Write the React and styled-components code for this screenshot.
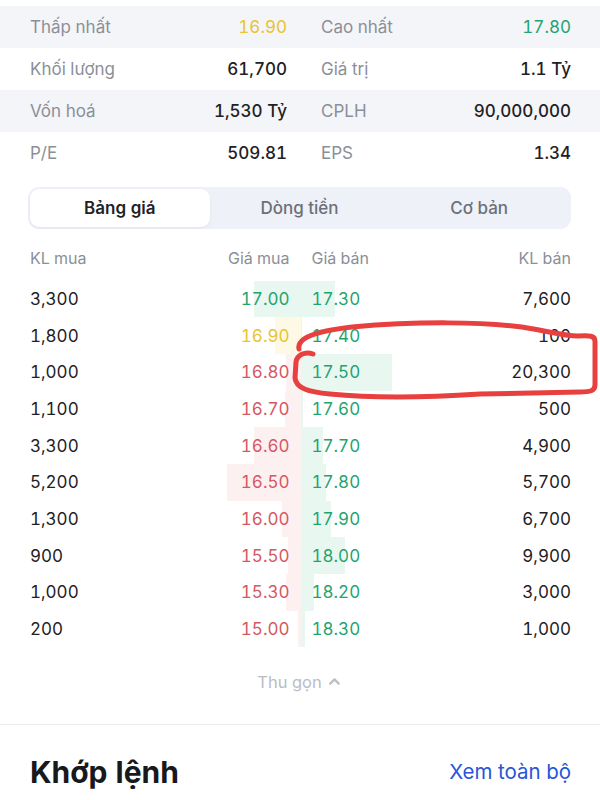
import React from 'react'
import styled, { createGlobalStyle } from 'styled-components'
import { ChevronUp } from 'lucide-react'

const GlobalStyle = createGlobalStyle`
  body {
    margin: 0;
    background: #fff;
    font-family: Inter, "Noto Sans", sans-serif;
    font-variant-numeric: tabular-nums;
    -webkit-font-smoothing: antialiased;
  }
`

const tones = {
  green: '#1fa470',
  red: '#d65862',
  yellow: '#e8c430',
}

const barTones = {
  green: '#e9f7f1',
  red: '#fdf0f1',
  yellow: '#fdf9e4',
}

const Page = styled.div`
  position: relative;
  width: 600px;
  padding-top: 6px;
  overflow: hidden;
`

const StatsRow = styled.div`
  display: grid;
  grid-template-columns: 257px 1fr;
  column-gap: 34px;
  align-items: center;
  height: 42px;
  padding: 0 29px 0 30px;
  background: ${p => (p.$shaded ? '#f3f5f9' : '#fff')};
`

const Pair = styled.div`
  display: flex;
  justify-content: space-between;
  align-items: center;
`

const Label = styled.span`
  font-size: 17px;
  color: #8b8f98;
`

const Value = styled.span`
  font-size: 17px;
  font-weight: ${p => (p.$tone ? 400 : 500)};
  color: ${p => (p.$tone ? tones[p.$tone] : '#1f2125')};
`

const Tabs = styled.div`
  display: grid;
  grid-template-columns: repeat(3, 1fr);
  height: 38px;
  margin: 13px 29px 0 28px;
  padding: 2px;
  border-radius: 11px;
  background: #eef1f7;
`

const Tab = styled.div`
  display: flex;
  align-items: center;
  justify-content: center;
  border-radius: 9px;
  font-size: 17px;
  font-weight: ${p => (p.$active ? 600 : 500)};
  color: ${p => (p.$active ? '#1f2227' : '#6b7079')};
  background: ${p => (p.$active ? '#fff' : 'transparent')};
  box-shadow: ${p => (p.$active ? '0 1px 3px rgba(0,0,0,0.06)' : 'none')};
`

const BookHeader = styled.div`
  display: grid;
  grid-template-columns: 1fr 1fr;
  height: 30px;
  margin: 14px 29px 0 30px;
  font-size: 16px;
  color: #8b8f98;
`

const HeadCell = styled.div`
  display: flex;
  justify-content: space-between;
  align-items: center;
  padding: ${p => (p.$side === 'buy' ? '0 11px 0 0' : '0 0 0 11px')};
`

const Book = styled.div`
  margin: 7.7px 29px 0 30px;
`

const BookRow = styled.div`
  display: grid;
  grid-template-columns: 1fr 1fr;
  height: 36.67px;
`

const Half = styled.div`
  position: relative;
  display: flex;
  justify-content: space-between;
  align-items: center;
  padding: ${p => (p.$side === 'buy' ? '0 11px 0 0' : '0 0 0 11px')};
`

const Bar = styled.div`
  position: absolute;
  top: 0;
  bottom: 0;
  ${p => (p.$side === 'buy' ? 'right: 0;' : 'left: 0;')}
  background: ${p => barTones[p.$tone]};
`

const Vol = styled.span`
  position: relative;
  font-size: 17px;
  color: #1f2125;
`

const Price = styled.span`
  position: relative;
  font-size: 17px;
  color: ${p => tones[p.$tone]};
`

const Collapse = styled.div`
  display: flex;
  align-items: center;
  justify-content: center;
  gap: 4px;
  height: 69px;
  font-size: 16.5px;
  color: #b9bdc5;
`

const Divider = styled.div`
  height: 1px;
  margin-top: 7.5px;
  background: #ececef;
`

const SectionHead = styled.div`
  display: flex;
  justify-content: space-between;
  align-items: center;
  height: 34px;
  margin: 30px 29px 0 30px;
`

const Title = styled.h2`
  margin: 0;
  font-size: 30px;
  font-weight: 700;
  color: #17191c;
`

const SeeAll = styled.a`
  font-size: 20.5px;
  color: #2756d6;
  text-decoration: none;
`

const Scribble = styled.svg`
  position: absolute;
  left: 0;
  top: 0;
  pointer-events: none;
`

const stats = [
  [['Thấp nhất', '16.90', 'yellow'], ['Cao nhất', '17.80', 'green']],
  [['Khối lượng', '61,700'], ['Giá trị', '1.1 Tỷ']],
  [['Vốn hoá', '1,530 Tỷ'], ['CPLH', '90,000,000']],
  [['P/E', '509.81'], ['EPS', '1.34']],
]

const book = [
  [3300, '17.00', 'green', '17.30', 7600],
  [1800, '16.90', 'yellow', '17.40', 100],
  [1000, '16.80', 'red', '17.50', 20300],
  [1100, '16.70', 'red', '17.60', 500],
  [3300, '16.60', 'red', '17.70', 4900],
  [5200, '16.50', 'red', '17.80', 5700],
  [1300, '16.00', 'red', '17.90', 6700],
  [900, '15.50', 'red', '18.00', 9900],
  [1000, '15.30', 'red', '18.20', 3000],
  [200, '15.00', 'red', '18.30', 1000],
]

const fmt = n => n.toLocaleString('en-US')

const App = () => {
  return (
    <Page>
      <GlobalStyle />
      {stats.map((row, i) => (
        <StatsRow key={i} $shaded={i % 2 === 0}>
          {row.map(([label, value, tone]) => (
            <Pair key={label}>
              <Label>{label}</Label>
              <Value $tone={tone}>{value}</Value>
            </Pair>
          ))}
        </StatsRow>
      ))}

      <Tabs>
        <Tab $active>Bảng giá</Tab>
        <Tab>Dòng tiền</Tab>
        <Tab>Cơ bản</Tab>
      </Tabs>

      <BookHeader>
        <HeadCell $side="buy"><span>KL mua</span><span>Giá mua</span></HeadCell>
        <HeadCell $side="sell"><span>Giá bán</span><span>KL bán</span></HeadCell>
      </BookHeader>

      <Book>
        {book.map(([buyVol, buyPrice, buyTone, sellPrice, sellVol]) => (
          <BookRow key={buyPrice}>
            <Half $side="buy">
              <Bar $side="buy" $tone={buyTone} style={{ width: buyVol * 0.0142 }} />
              <Vol>{fmt(buyVol)}</Vol>
              <Price $tone={buyTone}>{buyPrice}</Price>
            </Half>
            <Half $side="sell">
              <Bar $side="sell" $tone="green" style={{ width: sellVol * 0.0045 }} />
              <Price $tone="green">{sellPrice}</Price>
              <Vol>{fmt(sellVol)}</Vol>
            </Half>
          </BookRow>
        ))}
      </Book>

      <Collapse>
        Thu gọn <ChevronUp size={17} strokeWidth={3} />
      </Collapse>
      <Divider />

      <SectionHead>
        <Title>Khớp lệnh</Title>
        <SeeAll href="#">Xem toàn bộ</SeeAll>
      </SectionHead>

      {/* hand-drawn marker around the 17.50 ask */}
      <Scribble width="600" height="800" viewBox="0 0 600 800">
        <path
          d="M313,354 C305,351 297,355 296,362 L295,378 C296,388 308,392 330,394 C370,398 420,398 480,394 L580,392 C590,392 595,391 595,385 L595,341 C595,336 590,335 578,336 C562,336 548,331 522,327 C482,322 420,321 352,327 C326,330 311,334 304,339 C300,342 298,345 299,349"
          fill="none"
          stroke="#e8403f"
          strokeWidth="5"
          strokeLinecap="round"
          strokeLinejoin="round"
        />
      </Scribble>
    </Page>
  )
}

export default App
